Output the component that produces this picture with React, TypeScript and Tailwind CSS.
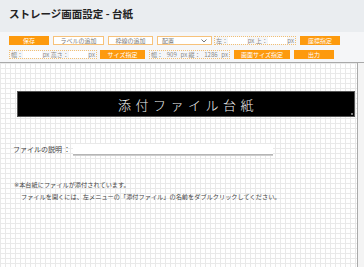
import React from "react";

const font = { fontFamily: '"Noto Sans CJK JP", "Noto Sans", sans-serif' };

const OrangeButton = ({ label, w }: { label: string; w: string }) => (
  <button
    className={`${w} h-[9px] bg-[#fd9a0e] text-white text-[6px] leading-[9px] text-center shrink-0 whitespace-nowrap`}
  >
    {label}
  </button>
);

const WhiteButton = ({ label, w }: { label: string; w: string }) => (
  <button
    className={`${w} h-[9px] bg-white border border-[#f7c27a] text-[#777] text-[6px] leading-[7px] text-center shrink-0 whitespace-nowrap`}
  >
    {label}
  </button>
);

const Field = () => <span className="inline-block w-[19px] h-[8px] bg-white shrink-0" />;

const App = () => {
  return (
    <div className="w-[364px] h-[267px] overflow-hidden bg-[#f2f2f2] flex flex-col" style={font}>
      {/* Header */}
      <div className="h-[32px] bg-[#eaedf0] pl-[9px] pt-[7px]">
        <h1 className="text-[10.5px] leading-[14px] font-bold text-[#222]">
          ストレージ画面設定 - 台紙
        </h1>
      </div>

      {/* Toolbar */}
      <div className="h-[31px] bg-[#f5f6f8] border-b border-[#a9a9a9] pl-[9px] pt-[4px] flex flex-col gap-[5px]">
        <div className="flex items-center h-[9px]">
          <OrangeButton label="保存" w="w-[40px]" />
          <div className="w-[4px]" />
          <WhiteButton label="ラベルの追加" w="w-[51px]" />
          <div className="w-[4px]" />
          <WhiteButton label="枠線の追加" w="w-[45px]" />
          <div className="w-[4px]" />
          <div className="w-[55px] h-[9px] bg-white border border-[#f7c27a] flex items-center justify-between px-[4px] text-[6px] text-[#777] shrink-0">
            <span>配置</span>
            <svg width="6" height="4" viewBox="0 0 6 4">
              <path d="M0.5 0.5 L3 3 L5.5 0.5" fill="none" stroke="#666" strokeWidth="0.9" />
            </svg>
          </div>
          <div className="w-[2px]" />
          <div className="w-[82px] h-[9px] border border-dotted border-[#f2bf73] flex items-center justify-between text-[6px] text-[#888] px-[1px] whitespace-nowrap shrink-0 overflow-hidden">
            <span>左：</span>
            <Field />
            <span>px 上：</span>
            <Field />
            <span>px</span>
          </div>
          <div className="w-[4px]" />
          <OrangeButton label="座標指定" w="w-[40px]" />
        </div>
        <div className="flex items-center h-[9px]">
          <div className="w-[88px] h-[9px] border border-dotted border-[#f2bf73] flex items-center justify-between text-[6px] text-[#888] px-[1px] whitespace-nowrap shrink-0 overflow-hidden">
            <span>幅：</span>
            <Field />
            <span>px 高さ：</span>
            <Field />
            <span>px</span>
          </div>
          <div className="w-[3px]" />
          <OrangeButton label="サイズ指定" w="w-[45px]" />
          <div className="w-[4px]" />
          <div className="w-[81px] h-[9px] border border-dotted border-[#f2bf73] flex items-center justify-between text-[6px] text-[#888] px-[1px] shrink-0 whitespace-nowrap overflow-hidden">
            <span>幅：</span>
            <span>909</span>
            <span>px 縦：</span>
            <span>1286</span>
            <span>px</span>
          </div>
          <div className="w-[4px]" />
          <OrangeButton label="画面サイズ指定" w="w-[56px]" />
          <div className="w-[4px]" />
          <OrangeButton label="出力" w="w-[40px]" />
        </div>
      </div>

      {/* Canvas */}
      <div className="flex flex-1">
        <div className="w-[358px] h-full border-r border-[#aaa] bg-white bg-[linear-gradient(#e9e9e9_1px,transparent_1px),linear-gradient(90deg,#e9e9e9_1px,transparent_1px)] bg-[size:5px_5px]">
          <div className="relative mt-[28px] ml-[17px] w-[338px] h-[26px] bg-black border border-[#555] flex items-center justify-center">
            <span className="text-[#f2f2f2] text-[13px] font-light tracking-[4.5px] leading-none pl-[4px]">添付ファイル台紙</span>
            <span className="absolute right-[1px] bottom-[1px] w-[2px] h-[2px] bg-[#777]" />
          </div>

          <div className="mt-[27px] ml-[13px] flex items-center h-[11px]">
            <span className="text-[7px] text-[#444] w-[60px] whitespace-nowrap">ファイルの説明 ：</span>
            <div className="w-[200px] h-[11px] bg-white border-b border-[#b5b5b5] shadow-[0_1px_0_#ccc]" />
          </div>

          <div className="mt-[24px] ml-[14px] text-[6.2px] leading-[12px] text-[#444]">
            <p>
              <span className="font-['DejaVu_Sans'] text-[#555]">※</span>本台紙にファイルが添付されています。
            </p>
            <p className="pl-[7px]">
              ファイルを開くには、左メニューの「添付ファイル」の名前をダブルクリックしてください。
            </p>
          </div>
        </div>
        <div className="flex-1 bg-[#f4f4f4]" />
      </div>
    </div>
  );
};

export default App;
